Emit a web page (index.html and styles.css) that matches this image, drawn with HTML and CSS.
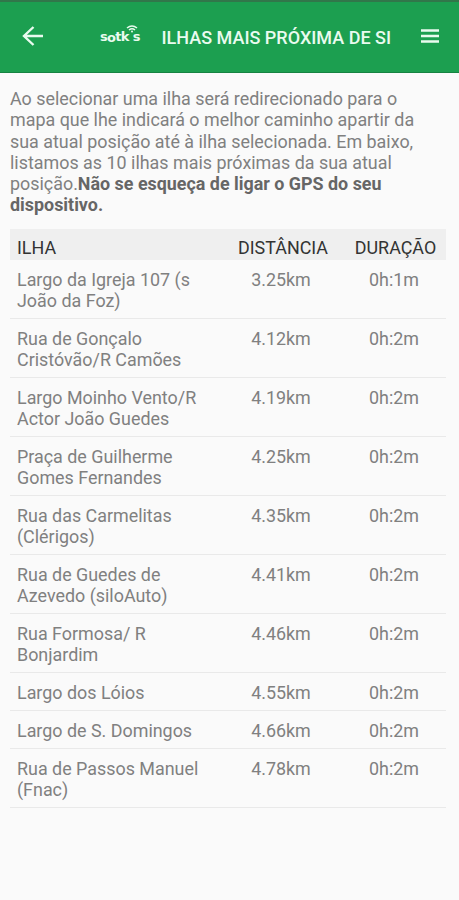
FILE: index.html
```html
<!DOCTYPE html>
<html lang="pt">
<head>
    <meta charset="UTF-8">
    <meta name="viewport" content="width=device-width, initial-scale=1.0">
    <title>Ilhas mais próxima de si</title>
    <link rel="stylesheet" href="styles.css">
</head>
<body>

    <header class="toolbar">
        <button class="icon-button back-button" aria-label="Voltar">
            <svg width="22" height="20" viewBox="0 0 22 20" fill="none" stroke="currentColor" stroke-width="2.4">
                <path d="M21 10H2M11.500 1L2 10l9.500 9"/>
            </svg>
        </button>
        <div class="logo">
            <span>s</span><span class="logo-low">o</span><span>tk</span>
            <svg class="logo-wifi" width="12" height="8" viewBox="0 0 12 8" fill="none" stroke="currentColor" stroke-width="1.6">
                <path d="M1 3Q6-1 11 3M3 5Q6 2.6 9 5"/>
                <circle cx="6" cy="6.6" r="1" fill="currentColor" stroke="none"/>
            </svg>
            <span class="logo-end">s</span>
        </div>
        <h1 class="title">ILHAS MAIS PRÓXIMA DE SI</h1>
        <button class="icon-button menu-button" aria-label="Menu">
            <svg width="18" height="14" viewBox="0 0 18 14" fill="none" stroke="currentColor" stroke-width="2.4">
                <path d="M0 1.500h18M0 7h18M0 12.500h18"/>
            </svg>
        </button>
    </header>

    <main class="content">
        <p class="intro">Ao selecionar uma ilha será redirecionado para o<br>mapa que lhe indicará o melhor caminho apartir da<br>sua atual posição até à ilha selecionada. Em baixo,<br>listamos as 10 ilhas mais próximas da sua atual<br>posição.<strong>Não se esqueça de ligar o GPS do seu<br>dispositivo.</strong></p>

        <div class="table">
            <div class="row table-head">
                <span>ILHA</span>
                <span class="center">DISTÂNCIA</span>
                <span class="center">DURAÇÃO</span>
            </div>
            <div class="row">
                <span>Largo da Igreja 107 (s<br>João da Foz)</span>
                <span class="center">3.25km</span>
                <span class="center">0h:1m</span>
            </div>
            <div class="row">
                <span>Rua de Gonçalo<br>Cristóvão/R Camões</span>
                <span class="center">4.12km</span>
                <span class="center">0h:2m</span>
            </div>
            <div class="row">
                <span>Largo Moinho Vento/R<br>Actor João Guedes</span>
                <span class="center">4.19km</span>
                <span class="center">0h:2m</span>
            </div>
            <div class="row">
                <span>Praça de Guilherme<br>Gomes Fernandes</span>
                <span class="center">4.25km</span>
                <span class="center">0h:2m</span>
            </div>
            <div class="row">
                <span>Rua das Carmelitas<br>(Clérigos)</span>
                <span class="center">4.35km</span>
                <span class="center">0h:2m</span>
            </div>
            <div class="row">
                <span>Rua de Guedes de<br>Azevedo (siloAuto)</span>
                <span class="center">4.41km</span>
                <span class="center">0h:2m</span>
            </div>
            <div class="row">
                <span>Rua Formosa/ R<br>Bonjardim</span>
                <span class="center">4.46km</span>
                <span class="center">0h:2m</span>
            </div>
            <div class="row">
                <span>Largo dos Lóios</span>
                <span class="center">4.55km</span>
                <span class="center">0h:2m</span>
            </div>
            <div class="row">
                <span>Largo de S. Domingos</span>
                <span class="center">4.66km</span>
                <span class="center">0h:2m</span>
            </div>
            <div class="row">
                <span>Rua de Passos Manuel<br>(Fnac)</span>
                <span class="center">4.78km</span>
                <span class="center">0h:2m</span>
            </div>
        </div>
    </main>

</body>
</html>
```

FILE: styles.css
```css
* {
    margin: 0;
    padding: 0;
    box-sizing: border-box;
}

body {
    min-height: 100vh;
    font-family: Roboto, sans-serif;
    font-size: 17.9px;
    line-height: 21.1px;
    color: #808080;
    background-color: #fafafa;
}

/* Top bar */
.toolbar {
    display: flex;
    align-items: center;
    height: 73px;
    padding: 0 20px 2px 22px;
    color: #e9fbef;
    background-color: #1c9f50;
    border-top: 2px solid #31774a;
    border-bottom: 1px solid #168342;
}

.icon-button {
    display: flex;
    color: inherit;
    background: none;
    border: none;
    cursor: pointer;
}

.logo {
    display: flex;
    width: 61.5px;
    margin-left: 56px;
    padding-top: 2px;
    font-family: 'DejaVu Sans', sans-serif;
    font-size: 13px;
    font-weight: bold;
    line-height: 16px;
    letter-spacing: -0.7px;
}

.logo-low {
    padding-top: 1px;
}

.logo-wifi {
    margin: -4px -7px 0 -3px;
}

.logo-end {
    margin-left: 2px;
}

.title {
    padding-top: 4px;
    font-size: 18px;
    font-weight: 500;
    white-space: nowrap;
}

.menu-button {
    margin-left: auto;
}

/* Page body */
.content {
    padding: 15.4px 13px 0 10px;
}

.intro {
    white-space: nowrap;
}

.intro strong {
    color: #666;
}

/* Islands table */
.table {
    margin-top: 14px;
}

.row {
    display: grid;
    grid-template-columns: 207px 114px 112px;
    padding: 9px 0 6.9px 7px;
    border-bottom: 1px solid #e9e9e9;
}

.center {
    text-align: center;
}

.table-head {
    grid-template-columns: 209px 114px 111px;
    height: 30.6px;
    padding-top: 8px;
    padding-bottom: 0;
    color: #333;
    background-color: #efefef;
    border-bottom: none;
}
```
